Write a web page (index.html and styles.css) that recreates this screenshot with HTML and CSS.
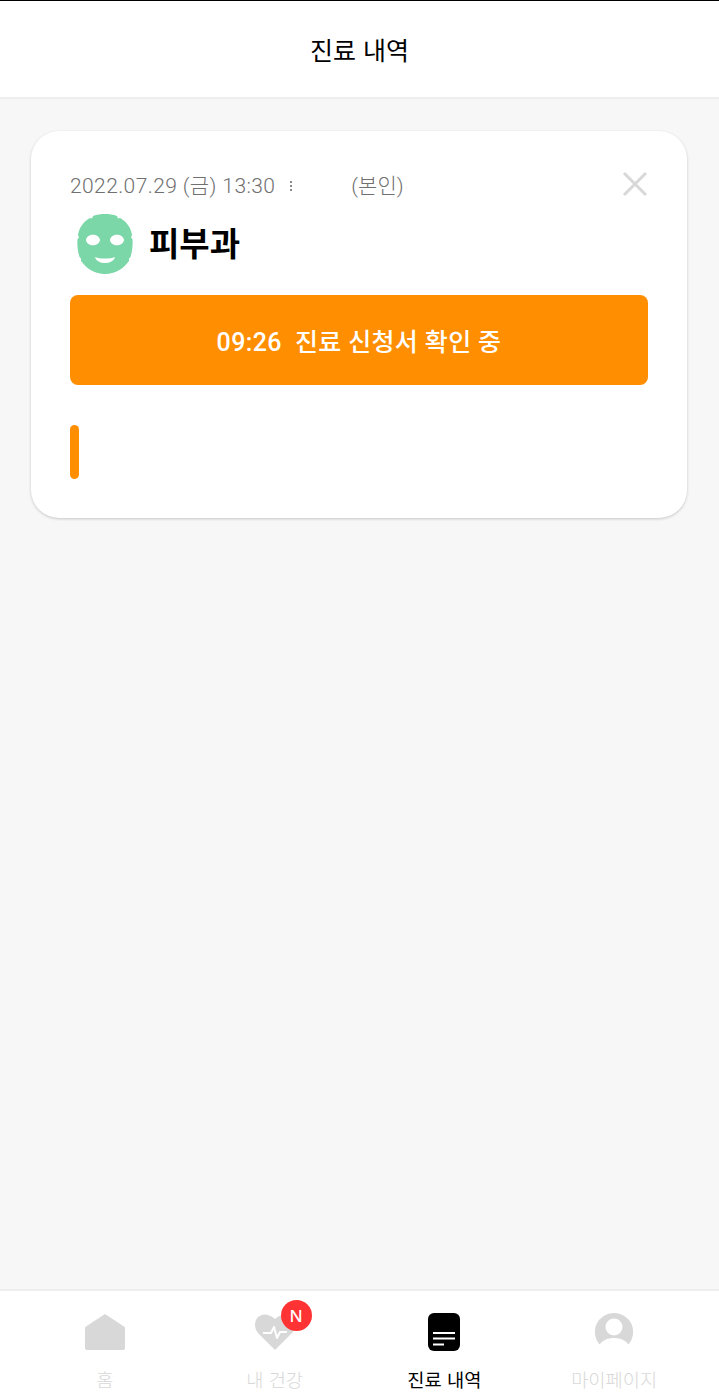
FILE: index.html
```html
<!DOCTYPE html>
<html lang="ko">
<head>
    <meta charset="UTF-8">
    <meta name="viewport" content="width=device-width, initial-scale=1.0">
    <title>진료 내역</title>
    <link rel="stylesheet" href="styles.css">
</head>
<body>
    <div class="app">
        <header class="top_bar">
            <h1>진료 내역</h1>
        </header>

        <main class="content">
            <section class="card">
                <div class="card_meta">
                    <span class="meta_date">2022.07.29 (금) 13:30</span>
                    <span class="meta_dots"></span>
                    <span class="meta_self">(본인)</span>
                    <button class="close_btn" type="button" aria-label="닫기">
                        <svg width="26" height="26" viewBox="0 0 26 26">
                            <path d="M2 2L24 24M24 2L2 24" stroke="#d8d8d8" stroke-width="3" fill="none"/>
                        </svg>
                    </button>
                </div>
                <div class="card_title">
                    <svg class="mask_icon" width="56" height="60" viewBox="0 0 56 60">
                        <path fill="#7bd6a8" fill-rule="evenodd" d="M28 0C32 0 36 0.500 40 2L41 4.500L43 4C50 8 54 14 55 21L54 23.500L55.500 25C56 32 55 38 53.500 43L52 44.500L52 47C46 55 38 60 28 60C18 60 10 55 4 47L4 44.500L2.500 43C1 38 0 32 0.500 25L2 23.500L1 21C2 14 6 8 13 4L15 4.500L16 2C20 0.500 24 0 28 0ZM9 26C10 33 22 33 23 26C22 19 10 19 9 26ZM33 26C34 33 46 33 47 26C46 19 34 19 33 26ZM18 43C23 45 33 45 38 43C36 51 20 51 18 43Z"/>
                    </svg>
                    <h2>피부과</h2>
                </div>
                <div class="status_box">09:26&nbsp; 진료 신청서 확인 중</div>
                <div class="progress_mark"></div>
            </section>
        </main>

        <nav class="bottom_nav">
            <a class="nav_item">
                <span class="nav_icon">
                    <svg width="40" height="36" viewBox="0 0 40 36">
                        <path fill="#d8d8d8" d="M20 0L39 12.500C39.600 13 40 13.500 40 14.500V34C40 35.200 39.200 36 38 36H2C0.800 36 0 35.200 0 34V14.500C0 13.500 0.400 13 1 12.500Z"/>
                    </svg>
                </span>
                <span class="nav_label">홈</span>
            </a>
            <a class="nav_item">
                <span class="nav_icon">
                    <svg width="40" height="36" viewBox="0 0 40 36">
                        <path fill="#d8d8d8" d="M20 36L3 19C-1 14.500 -1 7 3 3C7.500 -1 14 -0.500 20 5C26 -0.500 32.500 -1 37 3C41 7 41 14.500 37 19Z"/>
                        <path fill="none" stroke="#fff" stroke-width="2" stroke-linejoin="round" d="M8 19H16L19 13L22 24L25 18H32"/>
                    </svg>
                    <span class="nav_badge">N</span>
                </span>
                <span class="nav_label">내 건강</span>
            </a>
            <a class="nav_item nav_item_active">
                <span class="nav_icon">
                    <svg width="32" height="38" viewBox="0 0 32 38">
                        <rect width="32" height="38" rx="6" fill="#000"/>
                        <path fill="none" stroke="#fff" stroke-width="2" d="M5 20H27M5 25.500H27M5 31.500H16"/>
                    </svg>
                </span>
                <span class="nav_label">진료 내역</span>
            </a>
            <a class="nav_item">
                <span class="nav_icon">
                    <svg width="38" height="38" viewBox="0 0 38 38">
                        <path fill="#d8d8d8" fill-rule="evenodd" d="M19 0A19 19 0 0 1 33.500 31.500C30 27 25 25 19 25C13 25 8 27 4.500 31.500A19 19 0 0 1 19 0ZM19 5.500A8.500 8.500 0 1 0 19 22.500A8.500 8.500 0 1 0 19 5.500Z"/>
                    </svg>
                </span>
                <span class="nav_label">마이페이지</span>
            </a>
        </nav>
    </div>
</body>
</html>
```

FILE: styles.css
```css
body {
    font-family: "Noto Sans CJK KR", "Noto Sans", sans-serif;
    background-color: #f7f7f7;
    margin: 0;
    padding: 0;
}

.app {
    height: 1399px;
    display: flex;
    flex-direction: column;
    border-top: 1px solid #000;
    box-sizing: border-box;
}

.top_bar {
    height: 98px;
    flex: none;
    box-sizing: border-box;
    background-color: #fff;
    border-bottom: 2px solid #eeeeee;
    display: flex;
    justify-content: center;
    align-items: center;
}

h1 {
    margin: 0;
    font-size: 25px;
    font-weight: 400;
    color: #000;
}

.content {
    flex: 1;
    padding: 32px 32px 0 31px;
}

.card {
    height: 387px;
    box-sizing: border-box;
    padding: 0 39px;
    background-color: #fff;
    border-radius: 28px;
    box-shadow: 0 1px 3px rgba(0, 0, 0, 0.2);
}

.card_meta {
    height: 76px;
    padding: 40px 0 6px;
    box-sizing: border-box;
    display: flex;
    align-items: center;
    color: #707070;
    font-family: Roboto, "Noto Sans CJK KR", sans-serif;
    font-size: 21px;
    font-weight: 300;
    line-height: 30px;
}

.meta_date {
    letter-spacing: 0.4px;
}

.meta_dots {
    width: 2px;
    height: 12px;
    margin: 0 59px 0 15px;
    background-image: radial-gradient(circle, #8a8a8a 1px, transparent 1px);
    background-size: 2px 4px;
}

.close_btn {
    margin: -4px 0 0 auto;
    padding: 0;
    border: none;
    background: none;
    display: flex;
}

.card_title {
    height: 73px;
    padding-left: 7px;
    box-sizing: border-box;
    display: flex;
    align-items: center;
    gap: 16px;
}

h2 {
    margin: 0 0 3px;
    font-size: 33px;
    font-weight: 700;
    color: #000;
}

.status_box {
    margin-top: 15px;
    height: 90px;
    border-radius: 8px;
    background-color: #ff8f00;
    color: #fff;
    font-family: Roboto, "Noto Sans CJK KR", sans-serif;
    font-size: 25px;
    font-weight: 500;
    letter-spacing: 0.35px;
    display: flex;
    justify-content: center;
    align-items: center;
}

.progress_mark {
    width: 9px;
    height: 54px;
    margin-top: 40px;
    border-radius: 5px;
    background-color: #ff8f00;
}

.bottom_nav {
    height: 110px;
    flex: none;
    box-sizing: border-box;
    padding: 0 20px;
    background-color: #fff;
    border-top: 2px solid #eeeeee;
    display: grid;
    grid-template-columns: repeat(4, 1fr);
}

.nav_item {
    display: flex;
    flex-direction: column;
    align-items: center;
    color: #d8d8d8;
}

.nav_icon {
    position: relative;
    height: 38px;
    margin-top: 22px;
    display: flex;
    align-items: center;
}

.nav_badge {
    position: absolute;
    top: -13px;
    right: -17px;
    width: 31px;
    height: 31px;
    border-radius: 50%;
    background-color: #ff3333;
    color: #fff;
    font-family: "Noto Sans", sans-serif;
    font-size: 17px;
    font-weight: 500;
    display: flex;
    justify-content: center;
    align-items: center;
}

.nav_label {
    margin-top: 14px;
    font-size: 18.7px;
    font-weight: 300;
    line-height: 28px;
}

.nav_item_active {
    color: #000;
}

.nav_item_active .nav_label {
    font-weight: 400;
}
```
